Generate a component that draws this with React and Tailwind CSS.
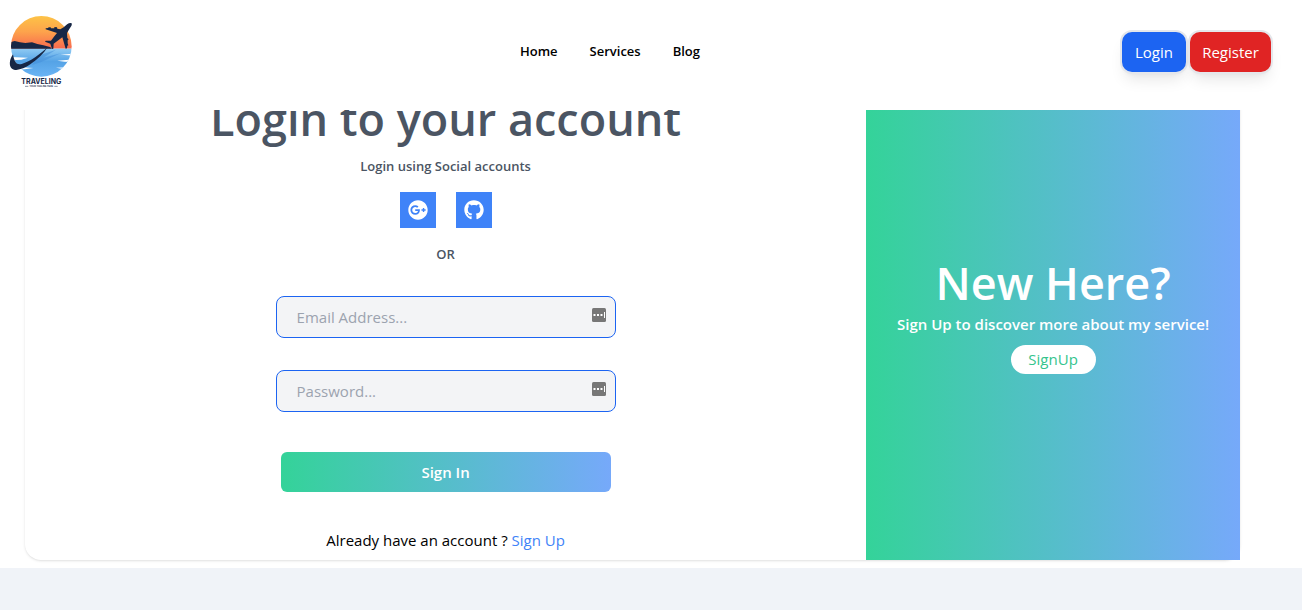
import React from "react";
import { FaGithub, FaGooglePlus } from "react-icons/fa";

function Logo() {
  return (
    <svg viewBox="0 0 294 285" className="h-[95px] w-[98px]" role="img" aria-label="Traveling">
      <defs>
        <linearGradient id="sky" x1="0" y1="0" x2="0" y2="1">
          <stop offset="0" stopColor="#fdc546" />
          <stop offset="0.5" stopColor="#fda34c" />
          <stop offset="1" stopColor="#f8694f" />
        </linearGradient>
        <linearGradient id="sea" x1="0" y1="0" x2="0" y2="1">
          <stop offset="0" stopColor="#8fcaf3" />
          <stop offset="0.45" stopColor="#55a3e6" />
          <stop offset="1" stopColor="#6bb5f5" />
        </linearGradient>
        <clipPath id="disc">
          <circle cx="124" cy="124" r="91" />
        </clipPath>
      </defs>
      <g clipPath="url(#disc)">
        <rect x="30" y="30" width="190" height="101" fill="url(#sky)" />
        <rect x="30" y="131" width="190" height="86" fill="url(#sea)" />
        <path d="M30 112 L44 108 L60 112 L76 114 L96 112 L112 117 L130 121 L150 126 L156 131 H30Z" fill="#172746" />
        <path d="M34 156 L84 158 L64 164 L34 166Z M216 146 L182 149 L220 152Z M218 163 L172 167 L194 170 L216 171Z M30 182 L78 183 L66 187 L100 189 L74 193 L30 196Z M214 186 L168 188 L190 192 L216 195Z" fill="#fff" />
        <path d="M112 153 L168 134 L130 158 L182 145 L122 172 L96 180Z" fill="#468fdb" opacity="0.55" />
      </g>
      <path d="M143 127 C121 147 91 170 65 177 C51 181 43 173 39 148 C28 163 26 184 36 191 C49 200 72 191 91 178 C112 164 130 147 143 127Z" fill="#172746" />
      <path d="M214 54 C207 52 199 59 191 67 L181 73 L172 71 L171 67 L163 66 L163 70 L153 70 L152 67 L145 67 L145 69 L137 70 L137 73 L171 84 L163 94 L153 107 L137 107 L135 110 L151 116 L156 132 L160 131 L161 116 L176 105 L187 97 L197 131 L201 130 L202 122 L205 121 L203 115 L203 106 L206 103 L202 99 L201 84 L208 72 C214 64 218 58 214 54Z" fill="#172746" />
      <text x="124" y="238" textAnchor="middle" fontSize="21" fontWeight="700" fill="#172746" fontFamily="Inter, sans-serif">TRAVELING</text>
      <path d="M75 244H85 M163 244H173" stroke="#172746" strokeWidth="1.5" />
      <text x="124" y="247" textAnchor="middle" fontSize="7" fontWeight="600" fill="#172746" fontFamily="Inter, sans-serif">YOUR TAGLINE HERE</text>
    </svg>
  );
}

function KeyIcon() {
  return (
    <svg viewBox="0 0 14 14" className="absolute right-[10px] top-3 size-[14px]" aria-hidden="true">
      <rect width="14" height="14" rx="1.5" fill="#777" />
      <path d="M1.5 6h2v2h-2z M5 6h2v2h-2z M8.5 6h2v2h-2z M12 4h1v6h-1z" fill="#fff" />
    </svg>
  );
}

function Field({ id, type, label }) {
  return (
    <div className="relative w-[340px]">
      <input
        id={id}
        type={type}
        aria-label={label}
        placeholder={label}
        className="block h-[42px] w-full rounded-lg border border-[#1c64f2] bg-[#f3f4f6] px-5 text-[15px] font-medium text-[#374151] placeholder:text-[#9ca3af]"
      />
      <KeyIcon />
    </div>
  );
}

export default function App() {
  return (
    <div className="min-h-screen bg-[#f0f3f8] font-['Open_Sans','Noto_Sans',sans-serif] text-black">
      <header className="sticky top-0 z-10 flex h-[110px] items-center justify-between bg-white pr-[31px] pb-[6px]">
        <a href="#home"><Logo /></a>
        <nav className="flex gap-8 text-[13px] font-semibold">
          <a href="#home">Home</a>
          <a href="#services">Services</a>
          <a href="#blog">Blog</a>
        </nav>
        <div className="flex gap-1 text-[15px] text-white">
          <button className="h-10 w-16 rounded-[10px] bg-[#1c64f2] shadow-lg ring-2 ring-gray-200">Login</button>
          <button className="h-10 w-[81px] rounded-[10px] bg-[#e02424] shadow-lg ring-2 ring-gray-200">Register</button>
        </div>
      </header>

      <main className="-mt-6 bg-white pr-[62px] pb-2 pl-[25px]">
        <div className="flex rounded-2xl shadow">
          <section className="flex flex-[9] flex-col items-center pt-[9px] pb-2">
            <h1 className="text-[45px] leading-[48px] font-semibold text-[#4b5563]">Login to your account</h1>
            <p className="mt-[13px] text-[13px] leading-5 font-semibold text-[#4b5563]">Login using Social accounts</p>
            <div className="mt-4 flex gap-5 text-white">
              <button aria-label="Log in with Google" className="bg-[#3f83f8] p-2"><FaGooglePlus size={20} /></button>
              <button aria-label="Log in with GitHub" className="bg-[#3f83f8] p-2"><FaGithub size={20} /></button>
            </div>
            <p className="mt-4 text-[13px] leading-5 font-semibold text-[#4b5563]">OR</p>
            <form className="mt-8 flex flex-col items-center gap-8" onSubmit={(e) => e.preventDefault()}>
              <Field id="email" type="email" label="Email Address..." />
              <Field id="password" type="password" label="Password..." />
              <button className="mt-2 h-10 w-[330px] rounded-md bg-linear-to-r/srgb from-[#34d399] to-[#76a9fa] text-[15px] font-semibold text-white">Sign In</button>
            </form>
            <p className="mt-9 text-[15px] leading-6">
              Already have an account ? <a href="#signup" className="text-[#3f83f8]">Sign Up</a>
            </p>
          </section>
          <aside className="flex flex-[4] flex-col items-center bg-linear-to-r/srgb from-[#34d399] to-[#76a9fa] pt-[173px] text-white">
            <h2 className="text-[45px] leading-[48px] font-semibold">New Here?</h2>
            <p className="mt-[5px] text-[15px] leading-6 font-semibold">Sign Up to discover more about my service!</p>
            <button className="mt-[9px] h-[29px] w-[85px] rounded-full bg-white text-[15px] font-medium text-[#34c48d]">SignUp</button>
          </aside>
        </div>
      </main>
    </div>
  );
}
